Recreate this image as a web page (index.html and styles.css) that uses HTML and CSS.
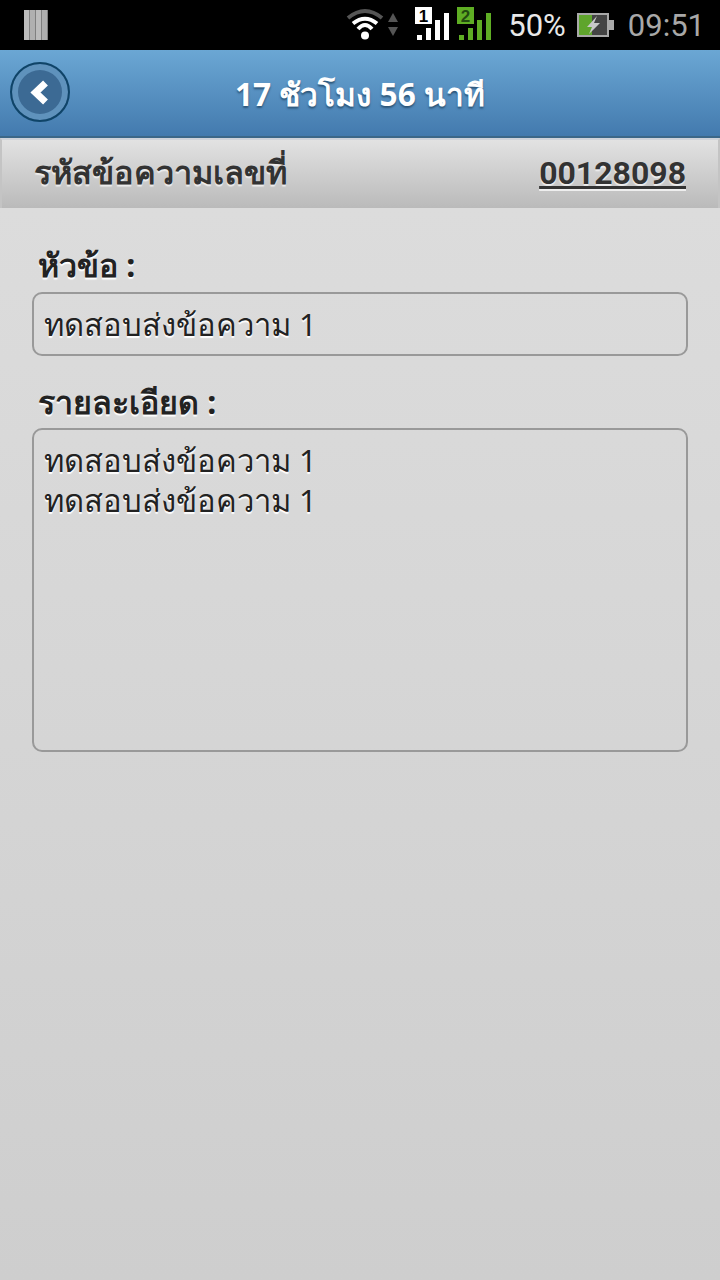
FILE: index.html
```html
<!DOCTYPE html>
<html lang="th">
<head>
  <meta charset="UTF-8">
  <title>ข้อความ</title>
  <meta name="viewport" content="width=device-width, initial-scale=1.0">
  <link rel="stylesheet" href="styles.css">
</head>
<body>
  <div class="statusbar">
    <svg class="sb-storage" width="24" height="30" viewBox="0 0 24 30">
      <rect width="24" height="30" fill="#808080"/>
      <rect x="0" y="0" width="5" height="30" fill="#bcbcbc"/>
      <rect x="6" y="0" width="5" height="30" fill="#b0b0b0"/>
      <rect x="12" y="0" width="5" height="30" fill="#bcbcbc"/>
      <rect x="18" y="0" width="5" height="30" fill="#b0b0b0"/>
    </svg>
    <div class="sb-right">
      <svg class="sb-wifi" width="56" height="34" viewBox="0 0 56 34">
        <path d="M3 10 Q20 -4 37 10" fill="none" stroke="#555" stroke-width="4"/>
        <path d="M8 15.500 Q20 6 32 15.500" fill="none" stroke="#fff" stroke-width="4"/>
        <path d="M13 21 Q20 13 27 21" fill="none" stroke="#fff" stroke-width="4"/>
        <circle cx="20" cy="27.500" r="4" fill="#fff"/>
        <path d="M48 5 L53 14 H43 Z" fill="#555"/>
        <path d="M48 28 L53 19 H43 Z" fill="#555"/>
      </svg>
      <svg class="sb-signal" width="36" height="36" viewBox="0 0 36 36">
        <rect x="0" y="1" width="17" height="17" fill="#fff"/>
        <text x="8.500" y="15.500" class="sim-num sim-black" text-anchor="middle">1</text>
        <rect x="2" y="29" width="5" height="5" fill="#fff"/>
        <rect x="11" y="22" width="5" height="12" fill="#fff"/>
        <rect x="20" y="14" width="5" height="20" fill="#fff"/>
        <rect x="29" y="7" width="5" height="27" fill="#fff"/>
      </svg>
      <svg class="sb-signal" width="36" height="36" viewBox="0 0 36 36">
        <rect x="0" y="1" width="17" height="17" fill="#5fae24"/>
        <text x="8.500" y="15.500" class="sim-num sim-dark" text-anchor="middle">2</text>
        <rect x="2" y="29" width="5" height="5" fill="#5fae24"/>
        <rect x="11" y="22" width="5" height="12" fill="#5fae24"/>
        <rect x="20" y="14" width="5" height="20" fill="#5fae24"/>
        <rect x="29" y="7" width="5" height="27" fill="#5fae24"/>
      </svg>
      <span class="sb-pct">50%</span>
      <svg class="sb-battery" width="38" height="24" viewBox="0 0 38 24">
        <rect x="0" y="0" width="32" height="24" fill="#a9a9a9"/>
        <rect x="2" y="2" width="28" height="20" fill="#444"/>
        <rect x="2" y="2" width="13" height="20" fill="#5fa52c"/>
        <rect x="32" y="7" width="5" height="10" fill="#a9a9a9"/>
        <path d="M20 3 L10 14 H15 L12 21 L23 10 H17 Z" fill="#c9c9c9"/>
      </svg>
      <span class="sb-time">09:51</span>
    </div>
  </div>

  <header class="topbar">
    <button class="back-btn">
      <svg width="24" height="32" viewBox="0 0 24 32">
        <path d="M17.500 7 L7.500 16.500 L17.500 26" fill="none" stroke="#fff" stroke-width="7"/>
      </svg>
    </button>
    <h1 class="topbar-title">17 ชัวโมง 56 นาที</h1>
  </header>

  <div class="msg-code">
    <span class="msg-code-label">รหัสข้อความเลขที่</span>
    <span class="msg-code-num">00128098</span>
  </div>

  <main class="content">
    <label class="field-label">หัวข้อ :</label>
    <div class="field field-subject">ทดสอบส่งข้อความ 1</div>
    <label class="field-label">รายละเอียด :</label>
    <div class="field field-detail">ทดสอบส่งข้อความ 1<br>ทดสอบส่งข้อความ 1</div>
  </main>
</body>
</html>
```

FILE: styles.css
```css
html, body {
  margin: 0;
  padding: 0;
  height: 100%;
}

body {
  display: flex;
  flex-direction: column;
  font-family: "Noto Sans", Roboto, "DejaVu Sans", sans-serif;
  background: #d0d0d0;
  color: #222;
}

.statusbar {
  height: 50px;
  background: #000;
  display: flex;
  align-items: center;
  justify-content: space-between;
  padding: 0 15px 0 24px;
  flex: none;
}

.sb-right {
  display: flex;
  align-items: center;
}

.sb-wifi {
  margin-right: 14px;
}

.sb-signal {
  margin-right: 6px;
  margin-bottom: 2px;
}

.sim-num {
  font-family: "Liberation Sans", sans-serif;
  font-weight: bold;
  font-size: 17px;
}

.sim-black {
  fill: #000;
}

.sim-dark {
  fill: #234a10;
}

.sb-pct {
  font-family: Roboto, sans-serif;
  font-size: 31px;
  color: #e8e8e8;
  margin-left: 9px;
  margin-right: 11px;
}

.sb-time {
  font-family: Roboto, sans-serif;
  font-size: 31px;
  color: #a8a8a8;
  margin-left: 13px;
}

.topbar {
  height: 88px;
  flex: none;
  box-sizing: border-box;
  background: linear-gradient(to bottom, #6ba7d4, #437aae);
  border-bottom: 2px solid #3c6788;
  position: relative;
  display: flex;
  align-items: center;
  justify-content: center;
}

.back-btn {
  position: absolute;
  left: 10px;
  top: 12px;
  width: 60px;
  height: 60px;
  padding: 0;
  border-radius: 50%;
  border: 2px solid #0f4468;
  background: #3c6a94;
  box-shadow: inset 0 0 0 6px #5f92bc;
  display: flex;
  align-items: center;
  justify-content: center;
}

.topbar-title {
  margin: 0;
  padding-top: 4px;
  font-size: 31.600px;
  font-weight: bold;
  color: #fff;
  text-shadow: 0 2px 2px #2c5578;
}

.msg-code {
  height: 70px;
  flex: none;
  box-sizing: border-box;
  background: linear-gradient(to bottom, #e2e2e2, #bababa);
  border-top: 2px solid #cfd3da;
  border-left: 2px solid #c4c4c4;
  border-right: 2px solid #c4c4c4;
  display: flex;
  align-items: center;
  justify-content: space-between;
  padding: 0 32px 4px 32px;
  font-size: 32.500px;
  font-weight: bold;
  color: #333;
  text-shadow: 0 2px 1px #eee;
}

.msg-code-num {
  font-family: Roboto, sans-serif;
  font-size: 32px;
  margin-top: 2px;
  text-decoration: underline;
}

.content {
  flex: 1;
  background: linear-gradient(to bottom, #dcdcdc, #cecece);
  padding: 37px 32px 0;
}

.field-label {
  display: block;
  margin-left: 6px;
  font-size: 32.200px;
  font-weight: bold;
  line-height: 40px;
  color: #222;
  text-shadow: 0 2px 1px #fff;
}

.field {
  box-sizing: border-box;
  border: 2px solid #999;
  border-radius: 10px;
  padding: 10px 10px 0;
  font-size: 31px;
  line-height: 40px;
  color: #222;
  text-shadow: 0 2px 1px #fff;
}

.field-subject {
  height: 64px;
  margin-top: 7px;
  margin-bottom: 26px;
}

.field-detail {
  height: 324px;
  margin-top: 6px;
}
```
